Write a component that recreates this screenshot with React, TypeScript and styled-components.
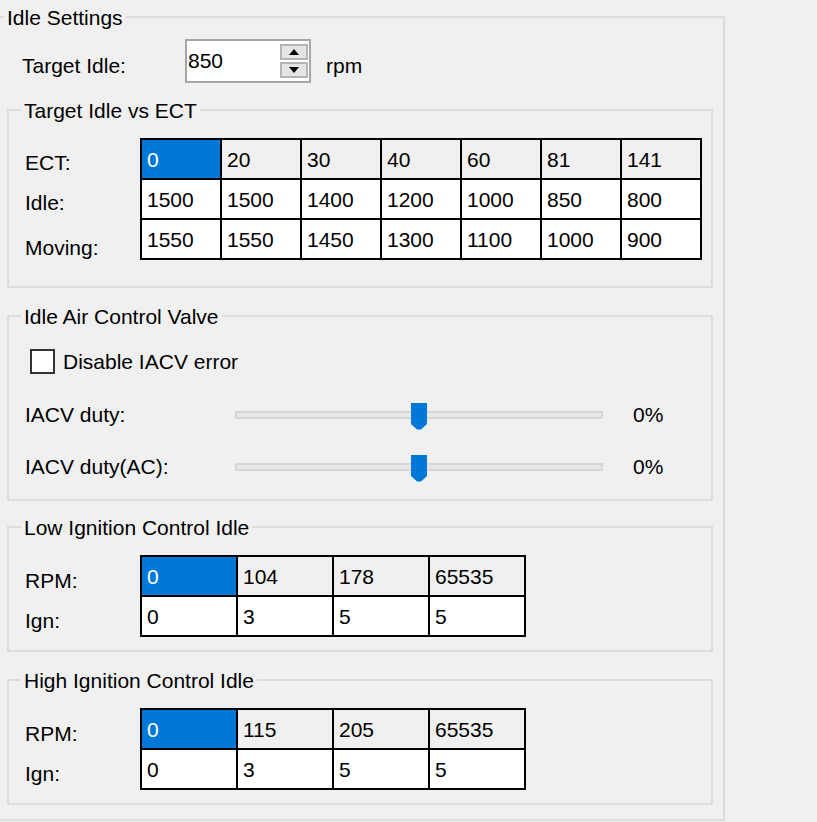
import React from 'react';
import styled, { createGlobalStyle } from 'styled-components';

const GlobalStyle = createGlobalStyle`
  html, body { margin: 0; padding: 0; background: #f0f0f0; }
  body {
    font-family: "Liberation Sans", Arial, sans-serif;
    font-size: 21px;
    color: #000;
    overflow: hidden;
  }
`;

const Page = styled.div`
  width: 817px;
  height: 822px;
  box-sizing: border-box;
  padding-top: 5px;
  background: #f0f0f0;
  overflow: hidden;
`;

const Group = styled.fieldset<{ $h: number; $w: number; $outer?: boolean; $mt?: number }>`
  box-sizing: border-box;
  margin: ${p => p.$mt ?? 0}px 0 0 0;
  padding: 0;
  min-width: 0;
  width: ${p => p.$w}px;
  height: ${p => p.$h}px;
  border: 2px solid #dcdcdc;
  border-left-width: ${p => (p.$outer ? 0 : 2)}px;
`;

const Legend = styled.legend<{ $ml: number }>`
  margin-left: ${p => p.$ml}px;
  padding: 0 3px;
  height: 24px;
  line-height: 25px;
  font-size: 21px;
`;

const OuterBody = styled.div`
  display: flex;
  flex-direction: column;
  padding-left: 7px;
`;

const IdleRow = styled.div`
  display: flex;
  align-items: flex-start;
  margin-top: 10px;
  padding-left: 15px;
  height: 44px;
`;

const Text = styled.span<{ $mt?: number; $w?: number; $ml?: number }>`
  display: block;
  line-height: 24px;
  white-space: nowrap;
  margin-top: ${p => p.$mt ?? 0}px;
  margin-left: ${p => p.$ml ?? 0}px;
  ${p => (p.$w ? `width: ${p.$w}px; flex: none;` : '')}
`;

const SpinBox = styled.div`
  box-sizing: border-box;
  width: 126px;
  height: 44px;
  border: 2px solid #a6a6a6;
  background: #fff;
  display: flex;
`;

const SpinValue = styled.div`
  flex: 1;
  display: flex;
  align-items: center;
  padding-left: 1px;
  line-height: 24px;
`;

const SpinButtons = styled.div`
  width: 29px;
  display: flex;
  flex-direction: column;
  gap: 2px;
  padding: 3px 1px 3px 0;
  box-sizing: border-box;
`;

const SpinButton = styled.div`
  flex: 1;
  box-sizing: border-box;
  border: 2px solid #b4b4b4;
  background: #e5e5e5;
  display: flex;
  align-items: center;
  justify-content: center;
`;

const GroupBody = styled.div`
  display: flex;
  align-items: flex-start;
  padding-left: 16px;
`;

const LabelCol = styled.div`
  width: 115px;
  flex: none;
  display: flex;
  flex-direction: column;
`;

const Grid = styled.div<{ $cols: number; $cw: number }>`
  margin-top: 16px;
  display: grid;
  grid-template-columns: repeat(${p => p.$cols}, ${p => p.$cw}px);
  grid-auto-rows: 38px;
  gap: 2px;
  border: 2px solid #000;
  background: #000;
`;

const Cell = styled.div<{ $kind: 'head' | 'data' | 'sel' }>`
  box-sizing: border-box;
  padding: 8px 0 0 5px;
  line-height: 24px;
  white-space: nowrap;
  background: ${p => (p.$kind === 'sel' ? '#0078d7' : p.$kind === 'head' ? '#f0f0f0' : '#ffffff')};
  color: ${p => (p.$kind === 'sel' ? '#ffffff' : '#000000')};
`;

const CheckRow = styled.div`
  display: flex;
  align-items: center;
  margin: 21px 0 0 21px;
  height: 25px;
`;

const CheckBox = styled.div`
  box-sizing: border-box;
  width: 25px;
  height: 25px;
  border: 2px solid #333;
  background: #fff;
  flex: none;
`;

const SliderRow = styled.div<{ $mt: number }>`
  display: flex;
  align-items: center;
  height: 26px;
  margin-top: ${p => p.$mt}px;
  padding-left: 16px;
`;

const Track = styled.div`
  position: relative;
  box-sizing: border-box;
  width: 368px;
  height: 8px;
  border: 2px solid #d6d6d6;
  background: #e7e7e7;
  flex: none;
`;

const Thumb = styled.svg`
  position: absolute;
  left: calc(50% - 8px);
  top: -10px;
  display: block;
`;

type Table = { head: string[]; rows: string[][] };

const DataGrid: React.FC<{ table: Table; cw: number }> = ({ table, cw }) => (
  <Grid $cols={table.head.length} $cw={cw}>
    {table.head.map((v, i) => (
      <Cell key={'h' + i} $kind={i === 0 ? 'sel' : 'head'}>{v}</Cell>
    ))}
    {table.rows.map((r, ri) =>
      r.map((v, i) => (
        <Cell key={ri + '-' + i} $kind="data">{v}</Cell>
      ))
    )}
  </Grid>
);

const Slider: React.FC<{ label: string; mt: number; value: string }> = ({ label, mt, value }) => (
  <SliderRow $mt={mt}>
    <Text $w={210}>{label}</Text>
    <Track>
      <Thumb width="16" height="27" viewBox="0 0 16 27">
        <polygon points="0,0 16,0 16,21 10,26.5 6,26.5 0,21" fill="#0078d7" />
      </Thumb>
    </Track>
    <Text $ml={30}>{value}</Text>
  </SliderRow>
);

const ectTable: Table = {
  head: ['0', '20', '30', '40', '60', '81', '141'],
  rows: [
    ['1500', '1500', '1400', '1200', '1000', '850', '800'],
    ['1550', '1550', '1450', '1300', '1100', '1000', '900'],
  ],
};

const lowTable: Table = { head: ['0', '104', '178', '65535'], rows: [['0', '3', '5', '5']] };
const highTable: Table = { head: ['0', '115', '205', '65535'], rows: [['0', '3', '5', '5']] };

const IgnGroup: React.FC<{ title: string; mt: number; table: Table }> = ({ title, mt, table }) => (
  <Group $w={706} $h={137} $mt={mt}>
    <Legend $ml={12}>{title}</Legend>
    <GroupBody>
      <LabelCol>
        <Text $mt={30}>RPM:</Text>
        <Text $mt={16}>Ign:</Text>
      </LabelCol>
      <DataGrid table={table} cw={94} />
    </GroupBody>
  </Group>
);

export default function App() {
  return (
    <Page>
      <GlobalStyle />
      <Group $outer $w={725} $h={816}>
        <Legend $ml={4}>Idle Settings</Legend>
        <OuterBody>
          <IdleRow>
            <Text $w={163} $mt={15}>Target Idle:</Text>
            <SpinBox>
              <SpinValue>850</SpinValue>
              <SpinButtons>
                <SpinButton>
                  <svg width="10" height="6" viewBox="0 0 10 6"><polygon points="0,6 10,6 5,0" fill="#000" /></svg>
                </SpinButton>
                <SpinButton>
                  <svg width="10" height="6" viewBox="0 0 10 6"><polygon points="0,0 10,0 5,6" fill="#000" /></svg>
                </SpinButton>
              </SpinButtons>
            </SpinBox>
            <Text $mt={15} $ml={15}>rpm</Text>
          </IdleRow>

          <Group $w={706} $h={190} $mt={15}>
            <Legend $ml={12}>Target Idle vs ECT</Legend>
            <GroupBody>
              <LabelCol>
                <Text $mt={29}>ECT:</Text>
                <Text $mt={16}>Idle:</Text>
                <Text $mt={21}>Moving:</Text>
              </LabelCol>
              <DataGrid table={ectTable} cw={78} />
            </GroupBody>
          </Group>

          <Group $w={706} $h={197} $mt={16}>
            <Legend $ml={12}>Idle Air Control Valve</Legend>
            <CheckRow>
              <CheckBox />
              <Text $ml={8}>Disable IACV error</Text>
            </CheckRow>
            <Slider label="IACV duty:" mt={28} value="0%" />
            <Slider label="IACV duty(AC):" mt={26} value="0%" />
          </Group>

          <IgnGroup title="Low Ignition Control Idle" mt={14} table={lowTable} />
          <IgnGroup title="High Ignition Control Idle" mt={16} table={highTable} />
        </OuterBody>
      </Group>
    </Page>
  );
}
